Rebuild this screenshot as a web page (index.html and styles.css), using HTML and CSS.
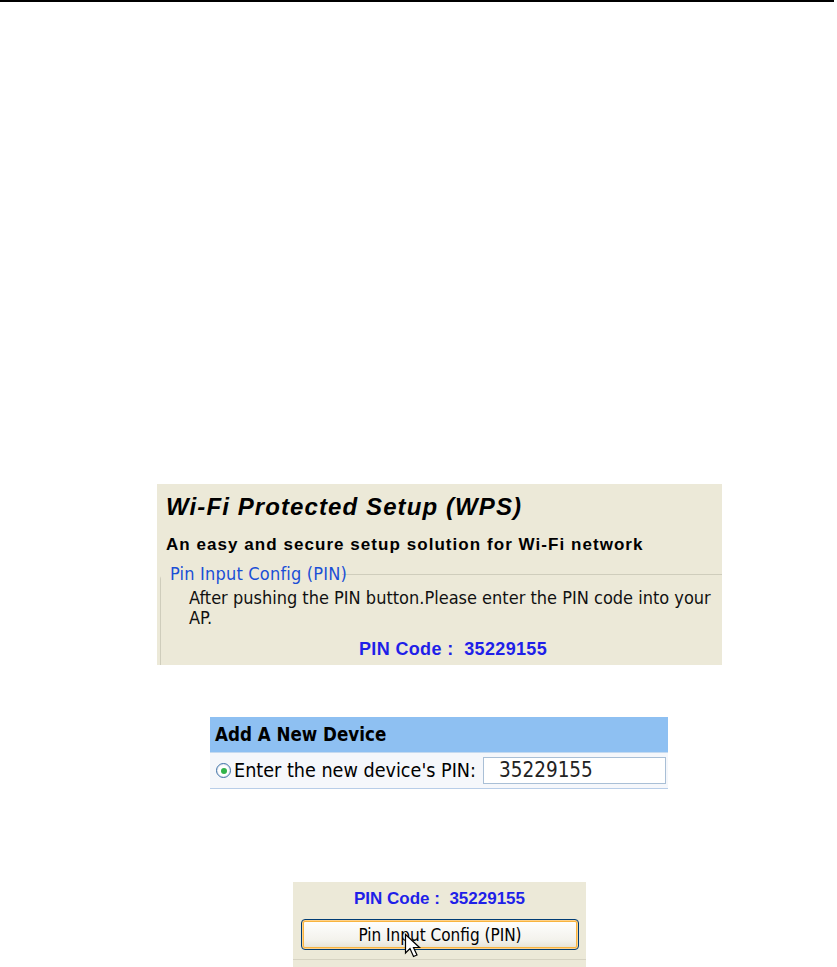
FILE: index.html
```html
<!DOCTYPE html>
<html>
<head>
<meta charset="utf-8">
<link rel="stylesheet" href="styles.css">
</head>
<body>
<div class="rule"></div>

<section class="wps">
  <h1 class="wps-title">Wi-Fi Protected Setup (WPS)</h1>
  <p class="wps-sub">An easy and secure setup solution for Wi-Fi network</p>
  <fieldset class="pin-box">
    <legend class="pin-legend">Pin Input Config (PIN)</legend>
    <p class="pin-text">After pushing the PIN button.Please enter the PIN code into your AP.</p>
    <p class="pin-code">PIN Code :&nbsp; 35229155</p>
  </fieldset>
</section>

<section class="device">
  <div class="device-head">Add A New Device</div>
  <div class="device-row">
    <span class="radio"><span class="radio-dot"></span></span>
    <span class="device-label">Enter the new device's PIN:</span>
    <span class="device-input">35229155</span>
  </div>
</section>

<section class="btn-panel">
  <p class="pin-code small">PIN Code :&nbsp; 35229155</p>
  <div class="btn-wrap">
    <button class="xp-btn">Pin Input Config (PIN)</button>
    <svg class="cursor" width="18" height="26" viewBox="0 0 18 26">
      <path d="M1.5 1.5 L1.5 20 L6 15.5 L9.5 23.5 L13 22 L9.5 14.5 L15.5 14.5 Z" fill="#fff" stroke="#000" stroke-width="1.2" stroke-linejoin="miter"/>
    </svg>
  </div>
  <div class="btn-line"></div>
</section>
</body>
</html>
```

FILE: styles.css
```css
html, body {
  margin: 0;
  padding: 0;
  background: #fff;
}
body {
  font-family: "Liberation Sans", Arial, sans-serif;
}
.rule {
  width: 834px;
  height: 2px;
  background: #000;
}

/* Panel 1 */
.wps {
  margin: 482px 0 0 157px;
  width: 565px;
  height: 181px;
  background: #ECE9D8;
  box-sizing: border-box;
  padding: 9px 0 0 9px;
  overflow: hidden;
}
.wps-title {
  margin: 0;
  font: italic bold 24px/28px "Liberation Sans", Arial, sans-serif;
  letter-spacing: 1.1px;
  color: #000;
}
.wps-sub {
  margin: 14px 0 0 0;
  font: bold 17px/20px "Liberation Sans", Arial, sans-serif;
  letter-spacing: 1.05px;
  color: #000;
}
.pin-box {
  margin: 9px 0 0 -6px;
  padding: 0 0 0 28px;
  border: 1px solid #CFCDBC;
  border-radius: 5px;
  width: 620px;
  height: 140px;
  box-sizing: border-box;
}
.pin-legend {
  padding: 0 3px 0 1px;
  margin-left: -28px;
  font: 18px/20px "DejaVu Sans Condensed", "DejaVu Sans", sans-serif;
  letter-spacing: 0.2px;
  color: #1A4FD6;
  position: relative;
  left: 8px;
}
.pin-text {
  margin: 4px 0 0 0;
  width: 535px;
  font: 18px/20px "DejaVu Sans Condensed", "DejaVu Sans", sans-serif;
  color: #111;
}
.pin-code {
  margin: 10px 0 0 170px;
  font: bold 18px/22px "Liberation Sans", Arial, sans-serif;
  letter-spacing: 0.35px;
  color: #1F1FE8;
}

/* Panel 2 */
.device {
  margin: 52px 0 0 210px;
  width: 458px;
  background: #F5F7FB;
  border-bottom: 1px solid #B8CDE8;
}
.device-head {
  height: 35px;
  background: #8EC0F2;
  font: bold 18.6px/35px "DejaVu Sans Condensed", "DejaVu Sans", sans-serif;
  color: #000;
  padding-left: 5px;
  border-bottom: 1px solid #C5DAF0;
}
.device-row {
  height: 35px;
  display: flex;
  align-items: center;
  padding-left: 6px;
}
.radio {
  width: 15px;
  height: 15px;
  border: 1px solid #3C6FA6;
  border-radius: 50%;
  background: #fff;
  box-shadow: inset 0 0 0 1px #E4E8EE;
  display: flex;
  align-items: center;
  justify-content: center;
  flex: none;
  box-sizing: border-box;
}
.radio-dot {
  width: 6px;
  height: 6px;
  border-radius: 50%;
  background: #31B34A;
}
.device-label {
  margin-left: 3px;
  font: 19.6px/22px "DejaVu Sans Condensed", "DejaVu Sans", sans-serif;
  color: #000;
}
.device-input {
  margin-left: 7px;
  width: 183px;
  height: 27px;
  box-sizing: border-box;
  border: 1px solid #A9BFD6;
  background: #fff;
  padding-left: 15px;
  font: 20.5px/25px "DejaVu Sans Condensed", "DejaVu Sans", sans-serif;
  color: #222;
}

/* Panel 3 */
.btn-panel {
  margin: 93px 0 0 293px;
  width: 293px;
  height: 85px;
  background: #ECE9D8;
  box-sizing: border-box;
  padding-top: 7px;
}
.pin-code.small {
  margin: 0 0 0 61px;
  font-size: 17px;
  line-height: 20px;
  letter-spacing: 0;
}
.btn-wrap {
  position: relative;
  margin: 10px 0 0 8px;
  width: 278px;
}
.xp-btn {
  display: block;
  width: 278px;
  height: 31px;
  border: 1px solid #003C74;
  border-radius: 4px;
  box-shadow: inset 0 0 0 1px #FFD28A, inset 0 0 0 2px #F8B440;
  background: linear-gradient(#FFFFFF, #F3F2EC 70%, #E3E0D2);
  font: 17px/20px "DejaVu Sans Condensed", "DejaVu Sans", sans-serif;
  color: #000;
  padding: 0;
}
.cursor {
  position: absolute;
  left: 103px;
  top: 14px;
}
.btn-line {
  margin-top: 9px;
  height: 1px;
  background: #D6D3C2;
}
```
